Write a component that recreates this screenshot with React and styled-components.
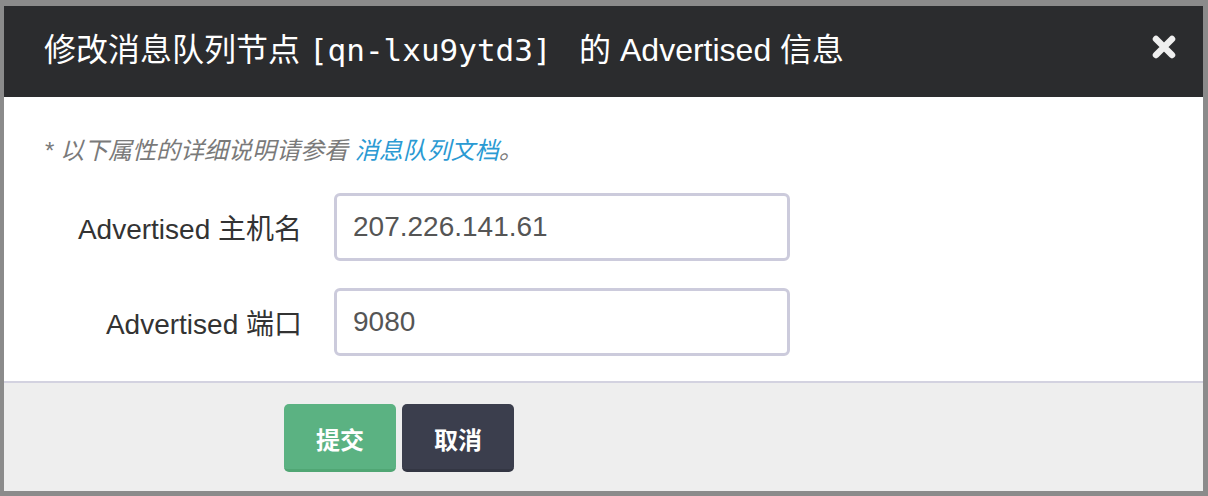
import React from "react";
import styled, { createGlobalStyle } from "styled-components";

const Global = createGlobalStyle`
  html, body { margin: 0; padding: 0; }
  body {
    background: #8b8b8b;
    width: 1208px;
    height: 496px;
    overflow: hidden;
    font-family: "Liberation Sans", "Noto Sans CJK SC", sans-serif;
  }
`;

const Overlay = styled.div`
  width: 1208px;
  height: 496px;
  padding: 6px 0 0 4px;
  box-sizing: border-box;
`;

const Dialog = styled.div`
  width: 1199px;
  height: 485px;
  display: flex;
  flex-direction: column;
  background: #fff;
`;

const Header = styled.div`
  height: 91px;
  flex: none;
  background: #2b2c2e;
  display: flex;
  align-items: center;
  justify-content: space-between;
  padding: 0 27px 10px 40px;
  box-sizing: border-box;
`;

const Title = styled.h1`
  margin: 0;
  font-weight: normal;
  font-size: 32px;
  color: #fff;
  font-family: "Liberation Sans", "Noto Sans CJK SC", sans-serif;
  white-space: pre;
`;

const Mono = styled.span`
  font-family: "DejaVu Sans Mono", "Liberation Mono", monospace;
  font-size: 31px;
`;

const Close = styled.button`
  border: 0;
  background: none;
  padding: 0;
  width: 24px;
  height: 24px;
  display: flex;
  cursor: pointer;
`;

const Body = styled.div`
  flex: 1;
  padding: 38px 40px 0 40px;
  box-sizing: border-box;
  display: flex;
  flex-direction: column;
`;

const Hint = styled.p`
  margin: 0 0 26px 0;
  font-size: 24px;
  line-height: 32px;
  font-style: italic;
  color: #7a7a7a;
`;

const Link = styled.a`
  color: #2a9ad3;
  text-decoration: none;
`;

const Form = styled.div`
  display: flex;
  flex-direction: column;
  gap: 27px;
`;

const Row = styled.div`
  display: grid;
  grid-template-columns: 258px 456px;
  column-gap: 32px;
  align-items: center;
`;

const Label = styled.label`
  text-align: right;
  font-size: 28px;
  color: #333;
`;

const Input = styled.input`
  height: 68px;
  box-sizing: border-box;
  border: 3px solid #cccbdc;
  border-radius: 6px;
  padding: 0 16px;
  font-size: 28px;
  color: #555;
  font-family: "Liberation Sans", "Noto Sans CJK SC", sans-serif;
  outline: none;
`;

const Footer = styled.div`
  height: 110px;
  flex: none;
  box-sizing: border-box;
  border-top: 2px solid #d3d2e0;
  background: #eeeeee;
  display: flex;
  align-items: flex-start;
  gap: 6px;
  padding: 21px 0 0 280px;
`;

const Button = styled.button`
  width: 112px;
  height: 68px;
  border: 0;
  border-radius: 5px;
  border-bottom: 3px solid ${(p) => (p.$primary ? "#50a674" : "#333643")};
  background: ${(p) => (p.$primary ? "#5bb282" : "#3b3e4d")};
  color: #fff;
  font-size: 24px;
  font-weight: bold;
  font-family: "Noto Sans CJK SC", sans-serif;
  padding: 3px 0 0 0;
  cursor: pointer;
`;

export default function App() {
  return (
    <>
      <Global />
      <Overlay>
        <Dialog>
          <Header>
            <Title>
              修改消息队列节点 <Mono>[qn-lxu9ytd3] </Mono> 的 Advertised 信息
            </Title>
            <Close aria-label="close">
              <svg width="24" height="24" viewBox="0 0 24 24">
                <path
                  d="M4 4 L20 20 M20 4 L4 20"
                  stroke="#efefef"
                  strokeWidth="6.5"
                  strokeLinecap="round"
                />
              </svg>
            </Close>
          </Header>
          <Body>
            <Hint>
              * 以下属性的详细说明请参看 <Link href="#">消息队列文档</Link>。
            </Hint>
            <Form>
              <Row>
                <Label>Advertised 主机名</Label>
                <Input defaultValue="207.226.141.61" />
              </Row>
              <Row>
                <Label>Advertised 端口</Label>
                <Input defaultValue="9080" />
              </Row>
            </Form>
          </Body>
          <Footer>
            <Button $primary>提交</Button>
            <Button>取消</Button>
          </Footer>
        </Dialog>
      </Overlay>
    </>
  );
}
